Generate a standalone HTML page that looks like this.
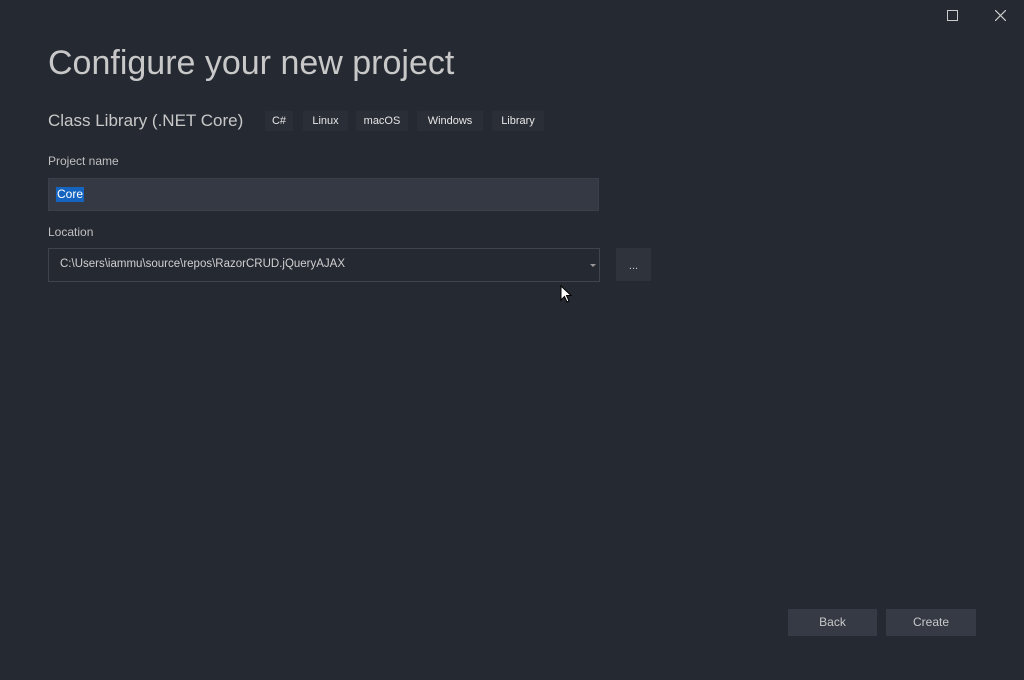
<!DOCTYPE html>
<html><head><style>
body{margin:0;width:1024px;height:680px;background:#252932;font-family:"Liberation Sans",sans-serif;color:#d0d0d0;position:relative;overflow:hidden}
.a{position:absolute}
.tag{position:absolute;top:111px;height:20px;background:#2a2e36;color:#e6e6e6;font-size:11px;line-height:20px;text-align:center}
.btn{position:absolute;top:609px;width:89px;height:27px;background:#353a44;color:#c8c8c8;font-size:12px;line-height:27px;text-align:center}
</style></head><body>
<div class="a" style="left:947px;top:10px;width:9px;height:9px;border:1px solid #ccc"></div>
<svg class="a" style="left:995px;top:10px" width="11" height="11"><path d="M0 0L11 11M11 0L0 11" stroke="#ccc" stroke-width="1.2"/></svg>
<div class="a" style="left:48px;top:44px;font-size:34px;color:#c8c8c8">Configure your new project</div>
<div class="a" style="left:48px;top:111px;font-size:17px;color:#c8c8c8">Class Library (.NET Core)</div>
<div class="tag" style="left:265px;width:28px">C#</div>
<div class="tag" style="left:303px;width:45px">Linux</div>
<div class="tag" style="left:356px;width:52px">macOS</div>
<div class="tag" style="left:417px;width:66px">Windows</div>
<div class="tag" style="left:492px;width:52px">Library</div>
<div class="a" style="left:48px;top:154px;font-size:12px;color:#c0c0c0">Project name</div>
<div class="a" style="left:48px;top:178px;width:551px;height:33px;background:#353943;border:1px solid #3b3f48;box-sizing:border-box"></div>
<div class="a" style="left:56px;top:187px;height:15px;padding:0 1px;background:#1565c0;color:#fff;font-size:12px;line-height:15px">Core</div>
<div class="a" style="left:48px;top:225px;font-size:12px;color:#c0c0c0">Location</div>
<div class="a" style="left:48px;top:248px;width:552px;height:34px;background:#252932;border:1px solid #3f434c;box-sizing:border-box"></div>
<div class="a" style="left:60px;top:258px;font-size:11.5px;color:#d0d0d0">C:\Users\iammu\source\repos\RazorCRUD.jQueryAJAX</div>
<div class="a" style="left:590px;top:264px;border-left:3px solid transparent;border-right:3px solid transparent;border-top:3px solid #999"></div>
<div class="a" style="left:616px;top:248px;width:35px;height:33px;background:#2f333c;color:#ccc;font-size:11px;text-align:center;line-height:36px">...</div>
<svg class="a" style="left:560px;top:285px" width="13" height="19"><path d="M1 1L1 15L4.5 11.5L7 17L9 16L6.5 10.5L11 10.5Z" fill="#fff" stroke="#000" stroke-width="1"/></svg>
<div class="btn" style="left:788px">Back</div>
<div class="btn" style="left:886px;width:90px">Create</div>
</body></html>
